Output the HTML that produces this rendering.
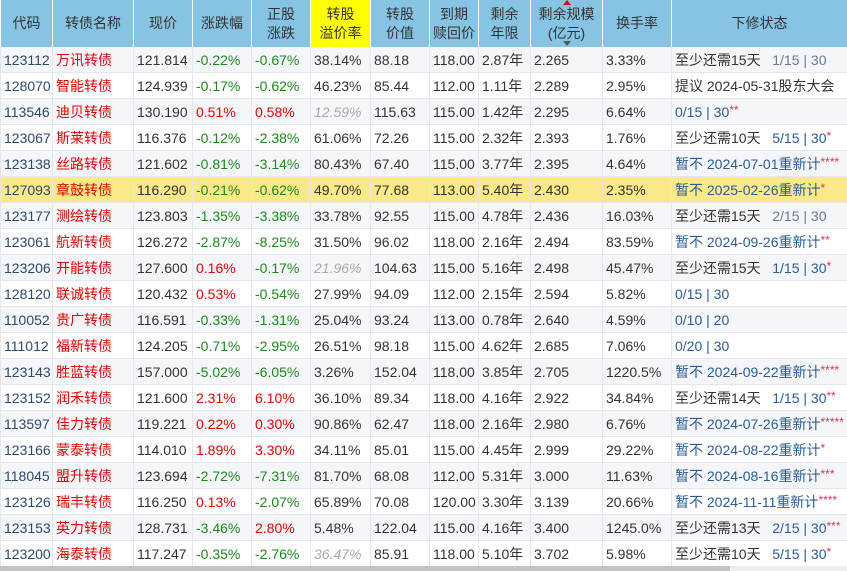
<!DOCTYPE html>
<html><head><meta charset="utf-8"><style>
body{margin:0;width:847px;height:571px;overflow:hidden;background:#fff;font-family:"Liberation Sans","Noto Sans CJK SC",sans-serif;}
table{border-collapse:collapse;table-layout:fixed;width:847px;font-size:14px;}
th{background:#87c4e4;color:#333;font-weight:normal;height:47px;padding:0;text-align:center;line-height:19px;border-right:1px solid #fff;border-left:1px solid #fff;position:relative;}
th.y{background:#ffff00;}
td{height:25px;padding:0 0 0 3px;border:1px solid #e4e7ee;border-top:none;white-space:nowrap;overflow:hidden;color:#333;}
tr.o td{background:#f4f6fa;}
tr.h td{background:#fae989;}
td.c{color:#2c4a6c;}
td.n{color:#e00;}
.g{color:#1a8a1a;}
.r{color:#e00;}
.i{color:#aaa;font-style:italic;}
.b{color:#2a5c98;}
.s{color:#6a7a8c;}
.st{color:#e03050;font-size:12px;position:relative;top:-3px;}
.up{position:absolute;left:32px;top:0;width:0;height:0;border-left:4px solid transparent;border-right:4px solid transparent;border-bottom:5px solid #e00;}
.dn{position:absolute;left:32px;bottom:1px;width:0;height:0;border-left:4px solid transparent;border-right:4px solid transparent;border-top:5px solid #555;}
.sb{position:absolute;left:0;top:566px;width:847px;height:5px;background:#eee;}
.sb div{width:730px;height:5px;background:#c4c4c4;}
</style></head><body>
<table>
<colgroup><col style="width:52px"><col style="width:81px"><col style="width:59px"><col style="width:59px"><col style="width:59px"><col style="width:60px"><col style="width:59px"><col style="width:49px"><col style="width:52px"><col style="width:72px"><col style="width:69px"><col style="width:176px"></colgroup>
<tr><th>代码</th><th>转债名称</th><th>现价</th><th>涨跌幅</th><th>正股<br>涨跌</th><th class="y">转股<br>溢价率</th><th>转股<br>价值</th><th>到期<br>赎回价</th><th>剩余<br>年限</th><th><span class="up"></span>剩余规模<br>(亿元)<span class="dn"></span></th><th>换手率</th><th>下修状态</th></tr>
<tr class="o"><td class="c">123112</td><td class="n">万讯转债</td><td>121.814</td><td class="g">-0.22%</td><td class="g">-0.67%</td><td>38.14%</td><td>88.18</td><td>118.00</td><td>2.87年</td><td>2.265</td><td>3.33%</td><td>至少还需15天 &nbsp; <span class="s">1/15 | 30</span></td></tr>
<tr><td class="c">128070</td><td class="n">智能转债</td><td>124.939</td><td class="g">-0.17%</td><td class="g">-0.62%</td><td>46.23%</td><td>85.44</td><td>112.00</td><td>1.11年</td><td>2.289</td><td>2.95%</td><td>提议 2024-05-31股东大会</td></tr>
<tr class="o"><td class="c">113546</td><td class="n">迪贝转债</td><td>130.190</td><td class="r">0.51%</td><td class="r">0.58%</td><td class="i">12.59%</td><td>115.63</td><td>115.00</td><td>1.42年</td><td>2.295</td><td>6.64%</td><td><span class="b">0/15 | 30</span><span class="st">**</span></td></tr>
<tr><td class="c">123067</td><td class="n">斯莱转债</td><td>116.376</td><td class="g">-0.12%</td><td class="g">-2.38%</td><td>61.06%</td><td>72.26</td><td>115.00</td><td>2.32年</td><td>2.393</td><td>1.76%</td><td>至少还需10天 &nbsp; <span class="b">5/15 | 30</span><span class="st">*</span></td></tr>
<tr class="o"><td class="c">123138</td><td class="n">丝路转债</td><td>121.602</td><td class="g">-0.81%</td><td class="g">-3.14%</td><td>80.43%</td><td>67.40</td><td>115.00</td><td>3.77年</td><td>2.395</td><td>4.64%</td><td class="b">暂不 2024-07-01重新计<span class="st">****</span></td></tr>
<tr class="h"><td class="c">127093</td><td class="n">章鼓转债</td><td>116.290</td><td class="g">-0.21%</td><td class="g">-0.62%</td><td>49.70%</td><td>77.68</td><td>113.00</td><td>5.40年</td><td>2.430</td><td>2.35%</td><td class="b">暂不 2025-02-26重新计<span class="st">*</span></td></tr>
<tr class="o"><td class="c">123177</td><td class="n">测绘转债</td><td>123.803</td><td class="g">-1.35%</td><td class="g">-3.38%</td><td>33.78%</td><td>92.55</td><td>115.00</td><td>4.78年</td><td>2.436</td><td>16.03%</td><td>至少还需15天 &nbsp; <span class="s">2/15 | 30</span></td></tr>
<tr><td class="c">123061</td><td class="n">航新转债</td><td>126.272</td><td class="g">-2.87%</td><td class="g">-8.25%</td><td>31.50%</td><td>96.02</td><td>118.00</td><td>2.16年</td><td>2.494</td><td>83.59%</td><td class="b">暂不 2024-09-26重新计<span class="st">**</span></td></tr>
<tr class="o"><td class="c">123206</td><td class="n">开能转债</td><td>127.600</td><td class="r">0.16%</td><td class="g">-0.17%</td><td class="i">21.96%</td><td>104.63</td><td>115.00</td><td>5.16年</td><td>2.498</td><td>45.47%</td><td>至少还需15天 &nbsp; <span class="b">1/15 | 30</span><span class="st">*</span></td></tr>
<tr><td class="c">128120</td><td class="n">联诚转债</td><td>120.432</td><td class="r">0.53%</td><td class="g">-0.54%</td><td>27.99%</td><td>94.09</td><td>112.00</td><td>2.15年</td><td>2.594</td><td>5.82%</td><td class="b">0/15 | 30</td></tr>
<tr class="o"><td class="c">110052</td><td class="n">贵广转债</td><td>116.591</td><td class="g">-0.33%</td><td class="g">-1.31%</td><td>25.04%</td><td>93.24</td><td>113.00</td><td>0.78年</td><td>2.640</td><td>4.59%</td><td class="b">0/10 | 20</td></tr>
<tr><td class="c">111012</td><td class="n">福新转债</td><td>124.205</td><td class="g">-0.71%</td><td class="g">-2.95%</td><td>26.51%</td><td>98.18</td><td>115.00</td><td>4.62年</td><td>2.685</td><td>7.06%</td><td class="b">0/20 | 30</td></tr>
<tr class="o"><td class="c">123143</td><td class="n">胜蓝转债</td><td>157.000</td><td class="g">-5.02%</td><td class="g">-6.05%</td><td>3.26%</td><td>152.04</td><td>118.00</td><td>3.85年</td><td>2.705</td><td>1220.5%</td><td class="b">暂不 2024-09-22重新计<span class="st">****</span></td></tr>
<tr><td class="c">123152</td><td class="n">润禾转债</td><td>121.600</td><td class="r">2.31%</td><td class="r">6.10%</td><td>36.10%</td><td>89.34</td><td>118.00</td><td>4.16年</td><td>2.922</td><td>34.84%</td><td>至少还需14天 &nbsp; <span class="b">1/15 | 30</span><span class="st">**</span></td></tr>
<tr class="o"><td class="c">113597</td><td class="n">佳力转债</td><td>119.221</td><td class="r">0.22%</td><td class="r">0.30%</td><td>90.86%</td><td>62.47</td><td>118.00</td><td>2.16年</td><td>2.980</td><td>6.76%</td><td class="b">暂不 2024-07-26重新计<span class="st">*****</span></td></tr>
<tr><td class="c">123166</td><td class="n">蒙泰转债</td><td>114.010</td><td class="r">1.89%</td><td class="r">3.30%</td><td>34.11%</td><td>85.01</td><td>115.00</td><td>4.45年</td><td>2.999</td><td>29.22%</td><td class="b">暂不 2024-08-22重新计<span class="st">*</span></td></tr>
<tr class="o"><td class="c">118045</td><td class="n">盟升转债</td><td>123.694</td><td class="g">-2.72%</td><td class="g">-7.31%</td><td>81.70%</td><td>68.08</td><td>112.00</td><td>5.31年</td><td>3.000</td><td>11.63%</td><td class="b">暂不 2024-08-16重新计<span class="st">***</span></td></tr>
<tr><td class="c">123126</td><td class="n">瑞丰转债</td><td>116.250</td><td class="r">0.13%</td><td class="g">-2.07%</td><td>65.89%</td><td>70.08</td><td>120.00</td><td>3.30年</td><td>3.139</td><td>20.66%</td><td class="b">暂不 2024-11-11重新计<span class="st">****</span></td></tr>
<tr class="o"><td class="c">123153</td><td class="n">英力转债</td><td>128.731</td><td class="g">-3.46%</td><td class="r">2.80%</td><td>5.48%</td><td>122.04</td><td>115.00</td><td>4.16年</td><td>3.400</td><td>1245.0%</td><td>至少还需13天 &nbsp; <span class="b">2/15 | 30</span><span class="st">***</span></td></tr>
<tr><td class="c">123200</td><td class="n">海泰转债</td><td>117.247</td><td class="g">-0.35%</td><td class="g">-2.76%</td><td class="i">36.47%</td><td>85.91</td><td>118.00</td><td>5.10年</td><td>3.702</td><td>5.98%</td><td>至少还需10天 &nbsp; <span class="b">5/15 | 30</span><span class="st">*</span></td></tr>
</table>
<div class="sb"><div></div></div>
</body></html>
